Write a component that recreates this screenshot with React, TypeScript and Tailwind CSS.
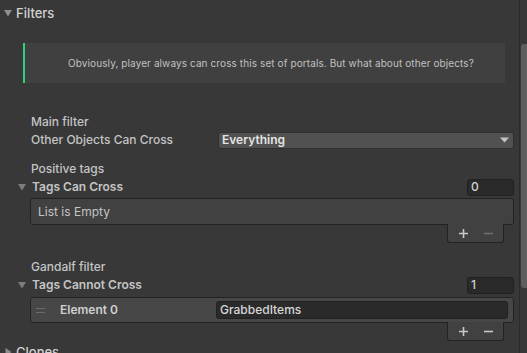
import React from "react";

const DownTri = ({ className = "", color = "#8c8c8c", size = 8 }: { className?: string; color?: string; size?: number }) => (
  <svg width={size} height={size} viewBox="0 0 8 8" className={className}>
    <path d="M0 1 L8 1 L4 7.5 Z" fill={color} />
  </svg>
);

const RightTri = ({ className = "" }: { className?: string }) => (
  <svg width="8" height="8" viewBox="0 0 8 8" className={className}>
    <path d="M1.5 0 L7.5 4 L1.5 8 Z" fill="#8c8c8c" />
  </svg>
);

const Footer = ({ minusOn }: { minusOn: boolean }) => (
  <div className="shrink-0 flex justify-end pr-[15px] -mt-px">
    <div className="w-[57px] h-[19px] bg-[#414141] border-x border-b border-[#232323] rounded-b-[3px] flex items-center justify-center gap-[15px]">
      <svg width="11" height="11" viewBox="0 0 11 11">
        <path d="M5.5 1 V10 M1 5.5 H10" stroke="#c8c8c8" strokeWidth="1.6" />
      </svg>
      <svg width="9" height="11" viewBox="0 0 9 11">
        <path d="M0 5.5 H9" stroke={minusOn ? "#c8c8c8" : "#6e6e6e"} strokeWidth="1.6" />
      </svg>
    </div>
  </div>
);

export default function App() {
  return (
    <div className="w-[527px] h-[353px] bg-[#383838] overflow-hidden flex font-['Inter',sans-serif] text-[12px] leading-[18px] text-[#c4c4c4] font-medium">
      <div className="w-[519px] shrink-0 flex flex-col">
        {/* Header */}
        <div className="shrink-0 mt-[4px] h-[18px] flex items-center">
          <DownTri className="ml-[4px]" color="#8f8f8f" />
          <span className="ml-[4px] text-[13px] text-[#d2d2d2] font-medium">Filters</span>
        </div>

        {/* Help box */}
        <div className="shrink-0 mt-[21px] ml-[23px] w-[482px] h-[40px] bg-[#404040] border-l-2 border-[#2fd27a] flex items-center justify-center pl-[12px] text-[10px] font-normal text-[#c0c0c0] tracking-[0.1px]">
          Obviously, player always can cross this set of portals. But what about other objects?
        </div>

        {/* Main filter */}
        <div className="shrink-0 mt-[30px] h-[18px] pl-[31px] flex items-center">Main filter</div>
        <div className="shrink-0 h-[18px] pl-[31px] flex items-center">
          <span className="w-[187px] shrink-0">Other Objects Can Cross</span>
          <div className="w-[296px] h-[17px] bg-[#515151] border border-[#303030] rounded-[3px] flex items-center pl-[3px] pr-[4px] text-[#e4e4e4] font-semibold">
            <span className="flex-1">Everything</span>
            <svg width="9" height="6" viewBox="0 0 9 6">
              <path d="M0 0.5 L9 0.5 L4.5 5.5 Z" fill="#c4c4c4" />
            </svg>
          </div>
        </div>

        {/* Positive tags */}
        <div className="shrink-0 mt-[11px] h-[18px] pl-[31px] flex items-center">Positive tags</div>
        <div className="shrink-0 h-[18px] flex items-center pr-[5px]">
          <DownTri className="ml-[18px]" color="#7d7d7d" />
          <span className="ml-[6px] font-semibold">Tags Can Cross</span>
          <div className="ml-auto w-[47px] h-[17px] bg-[#2a2a2a] border border-[#212121] rounded-[3px] flex items-center pl-[3px] text-[#d2d2d2]">0</div>
        </div>
        <div className="shrink-0 mt-[2px] ml-[30px] w-[484px] h-[27px] bg-[#414141] border border-[#232323] rounded-[3px] flex items-center pl-[7px] text-[#c4c4c4] font-normal">
          List is Empty
        </div>
        <Footer minusOn={false} />

        {/* Gandalf filter */}
        <div className="shrink-0 mt-[15px] h-[18px] pl-[31px] flex items-center">Gandalf filter</div>
        <div className="shrink-0 h-[18px] flex items-center pr-[5px]">
          <DownTri className="ml-[18px]" color="#7d7d7d" />
          <span className="ml-[6px] font-semibold">Tags Cannot Cross</span>
          <div className="ml-auto w-[47px] h-[17px] bg-[#2a2a2a] border border-[#212121] rounded-[3px] flex items-center pl-[3px] text-[#d2d2d2]">1</div>
        </div>
        <div className="shrink-0 mt-[3px] ml-[30px] w-[484px] h-[26px] bg-[#474747] border border-[#232323] rounded-[3px] flex items-center pr-[5px]">
          <div className="ml-[5px] w-[9px] flex flex-col gap-[3px]">
            <div className="h-px bg-[#6b6b6b]" />
            <div className="h-px bg-[#6b6b6b]" />
          </div>
          <span className="ml-[15px] w-[156px] shrink-0 font-semibold text-[#cfcfcf]">Element 0</span>
          <div className="flex-1 h-[18px] bg-[#2a2a2a] border border-[#212121] rounded-[3px] flex items-center pl-[3px] text-[#d6d6d6]">GrabbedItems</div>
        </div>
        <Footer minusOn={true} />

        {/* Clones */}
        <div className="shrink-0 mt-[2px] h-[18px] flex items-center">
          <RightTri className="ml-[4px]" />
          <span className="ml-[4px] text-[13px] text-[#d2d2d2]">Clones</span>
        </div>
      </div>

      {/* Scrollbar */}
      <div className="w-[8px] shrink-0 border-l border-[#2b2b2b] flex flex-col items-end">
        <div className="shrink-0 mt-[44px] w-[6px] h-[244px] bg-[#5e5e5e] rounded-tl-[3px] rounded-bl-[3px]" />
      </div>
    </div>
  );
}
